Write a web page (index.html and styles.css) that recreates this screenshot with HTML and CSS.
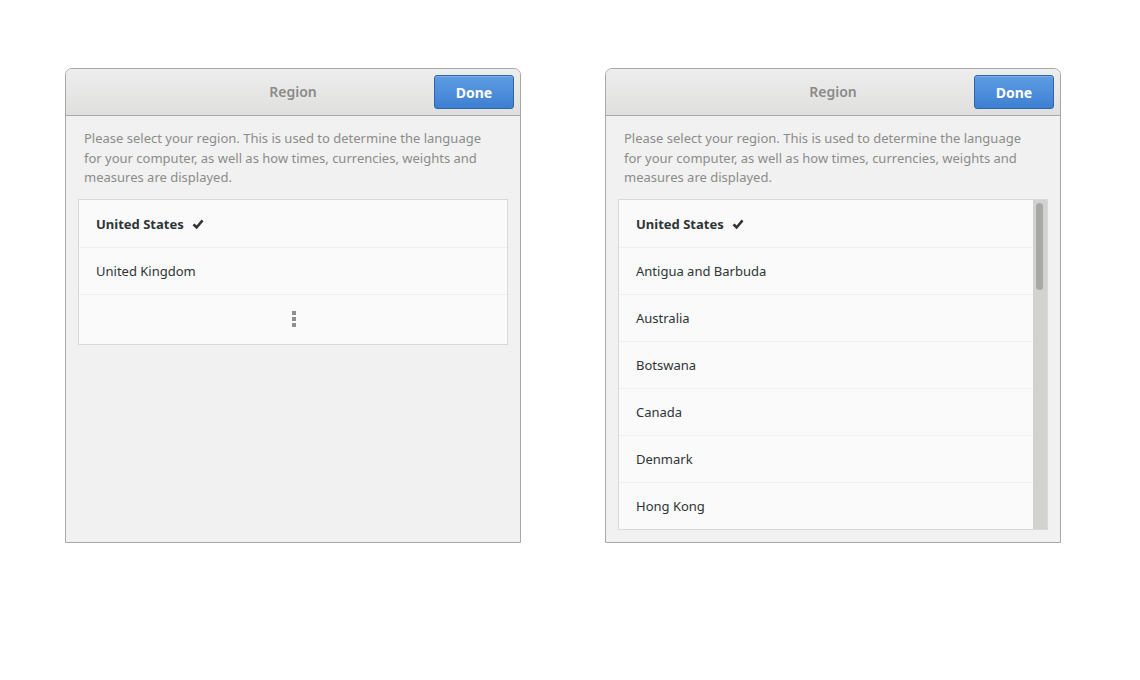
FILE: index.html
```html
<!DOCTYPE html>
<html>
<head>
<meta charset="utf-8">
<link rel="stylesheet" href="styles.css">
</head>
<body>
<div class="stage">
  <div class="dialog">
    <div class="header">
      <div class="title">Region</div>
      <button class="done">Done</button>
    </div>
    <div class="body">
      <p class="desc">Please select your region. This is used to determine the language for your computer, as well as how times, currencies, weights and measures are displayed.</p>
      <div class="list">
        <div class="row selected">United States <svg class="check" width="12" height="11" viewBox="0 0 12 11"><path d="M0.5 6.2 L2.6 4.4 L4.6 6.6 L9.6 0.6 L11.5 2.2 L4.7 10.2 Z" fill="#2e3436"/></svg></div>
        <div class="row">United Kingdom</div>
        <div class="row more"><span class="dots"><i></i><i></i><i></i></span></div>
      </div>
    </div>
  </div>

  <div class="dialog">
    <div class="header">
      <div class="title">Region</div>
      <button class="done">Done</button>
    </div>
    <div class="body">
      <p class="desc">Please select your region. This is used to determine the language for your computer, as well as how times, currencies, weights and measures are displayed.</p>
      <div class="list scroll">
        <div class="rows">
          <div class="row selected">United States <svg class="check" width="12" height="11" viewBox="0 0 12 11"><path d="M0.5 6.2 L2.6 4.4 L4.6 6.6 L9.6 0.6 L11.5 2.2 L4.7 10.2 Z" fill="#2e3436"/></svg></div>
          <div class="row">Antigua and Barbuda</div>
          <div class="row">Australia</div>
          <div class="row">Botswana</div>
          <div class="row">Canada</div>
          <div class="row">Denmark</div>
          <div class="row">Hong Kong</div>
        </div>
        <div class="trough"><div class="thumb"></div></div>
      </div>
    </div>
  </div>
</div>
</body>
</html>
```
FILE: styles.css
```css
html, body {
  margin: 0;
  padding: 0;
  background: #ffffff;
}
body {
  font-family: "Noto Sans", "Open Sans", sans-serif;
  width: 1140px;
  height: 680px;
  overflow: hidden;
}
.stage {
  display: flex;
  gap: 84px;
  padding: 68px 0 0 65px;
}
.dialog {
  width: 454px;
  height: 473px;
  border: 1px solid #a8a8a8;
  border-radius: 7px 7px 0 0;
  background: #f1f1f1;
  display: flex;
  flex-direction: column;
  overflow: hidden;
}
.header {
  height: 46px;
  flex: none;
  border-bottom: 1px solid #a8a8a8;
  background: linear-gradient(#ededed, #dfe0de);
  display: flex;
  align-items: center;
  justify-content: center;
  position: relative;
}
.title {
  font-size: 14px;
  font-weight: 600;
  color: #8a8b88;
  margin-top: -2px;
}
.done {
  position: absolute;
  right: 6px;
  top: 6px;
  width: 80px;
  height: 34px;
  border: 1px solid #2f65a8;
  border-radius: 3px;
  background: linear-gradient(#5e9ce3, #3e7fd2);
  color: #ffffff;
  font-family: "Noto Sans", "Open Sans", sans-serif;
  font-size: 14px;
  font-weight: 700;
  padding: 0;
  padding-top: 1px;
  box-shadow: inset 0 1px 0 rgba(255,255,255,0.2);
}
.body {
  padding: 13px 12px 0 12px;
  flex: 1;
  display: flex;
  flex-direction: column;
  min-height: 0;
}
.desc {
  margin: 0 0 11px 6px;
  font-size: 13px;
  line-height: 19.5px;
  color: #8b8c89;
  width: 404px;
}
.list {
  border: 1px solid #d9d9d7;
  background: #fafafa;
  width: 428px;
}
.row {
  height: 46px;
  box-sizing: content-box;
  border-bottom: 1px solid #efefee;
  display: flex;
  align-items: center;
  padding-left: 17px;
  padding-top: 1px;
  margin-top: -1px;
  font-size: 13px;
  color: #2e3436;
}
.row:first-child {
  margin-top: 0;
}
.row.selected {
  font-weight: 700;
}
.check {
  margin-left: 8px;
  margin-top: 1px;
}
.row.more {
  border-bottom: none;
  height: 49px;
  justify-content: center;
  padding-left: 0;
}
.dots {
  display: flex;
  flex-direction: column;
  gap: 2px;
  margin-left: 1px;
}
.dots i {
  display: block;
  width: 4px;
  height: 4px;
  background: #8e8e8c;
}
.list.scroll {
  display: flex;
  height: 329px;
  overflow: hidden;
}
.rows {
  flex: 1;
  overflow: hidden;
}
.trough {
  width: 14px;
  flex: none;
  background: #d2d2d1;
  padding-top: 3px;
  box-sizing: border-box;
}
.thumb {
  width: 7px;
  height: 87px;
  margin-left: 3px;
  border-radius: 4px;
  background: #a8a8a7;
}
```
